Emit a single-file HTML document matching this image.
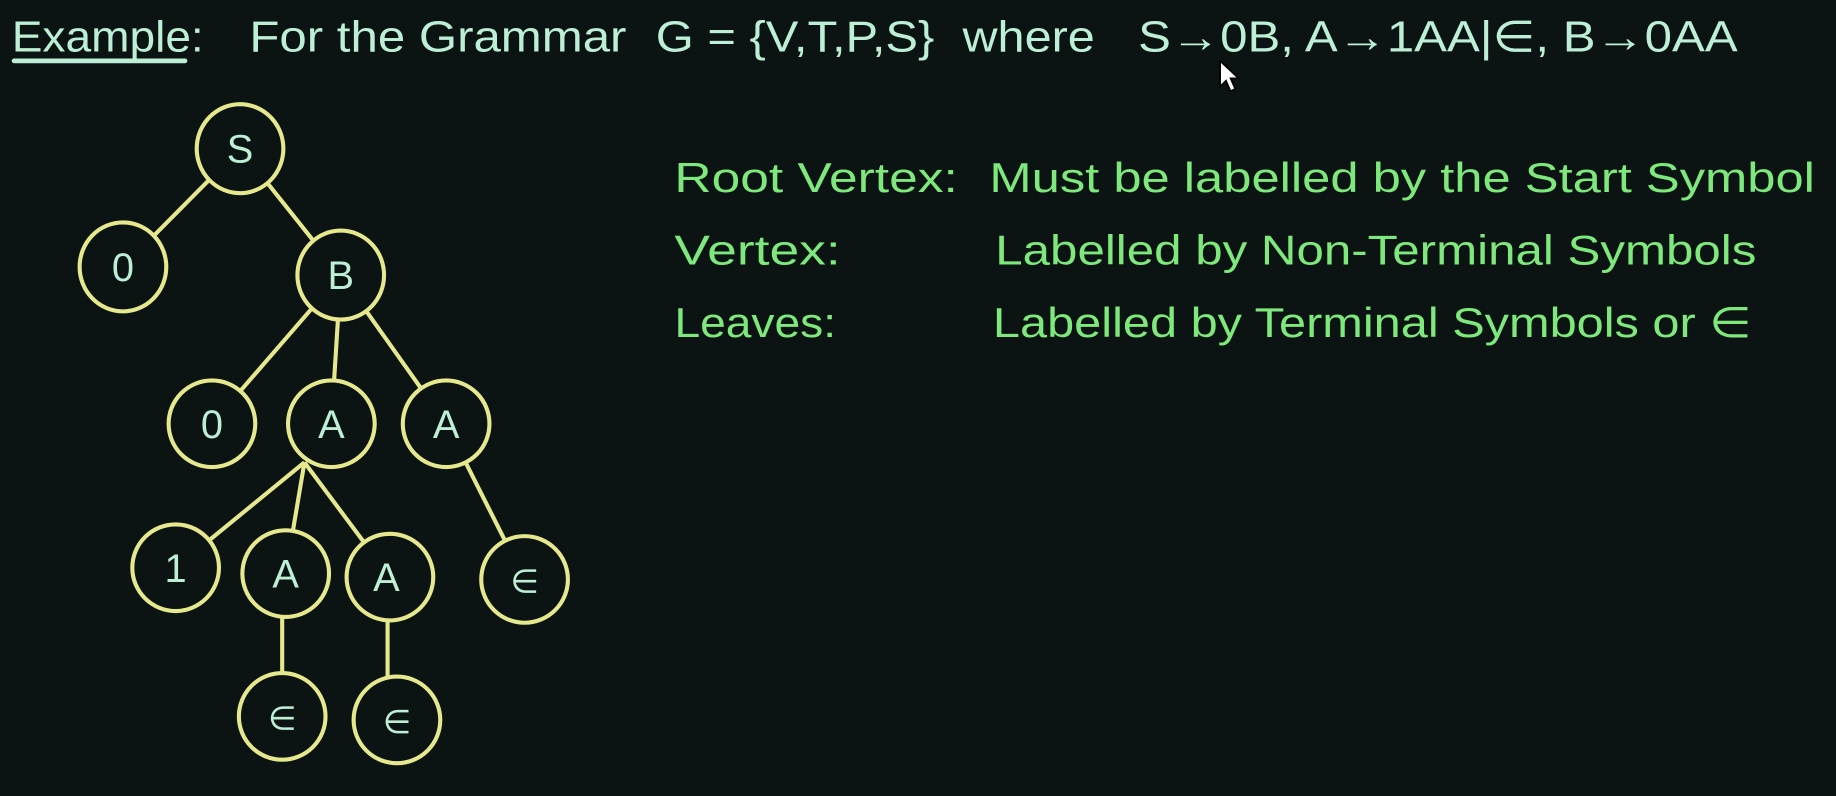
<!DOCTYPE html>
<html><head><meta charset="utf-8"><style>
html,body{margin:0;padding:0;background:#0b1412;width:1836px;height:796px;overflow:hidden}
svg{display:block}
text{font-family:"Liberation Sans","DejaVu Sans",sans-serif}
</style></head><body>
<svg width="1836" height="796" viewBox="0 0 1568 680" preserveAspectRatio="none">
<rect width="1568" height="680" fill="#0b1412"/>
<g fill="#bdeed6" font-size="37">
<text x="10" y="44" textLength="164" lengthAdjust="spacingAndGlyphs">Example:</text>
<text x="213" y="44" textLength="322" lengthAdjust="spacingAndGlyphs">For the Grammar</text>
<text x="560" y="44" textLength="238" lengthAdjust="spacingAndGlyphs">G = {V,T,P,S}</text>
<text x="822" y="44" textLength="113" lengthAdjust="spacingAndGlyphs">where</text>
<text x="972" y="44" textLength="512" lengthAdjust="spacingAndGlyphs">S→0B,  A→1AA|∈,  B→0AA</text>
</g>
<rect x="10" y="50" width="150" height="4" rx="2" fill="#bdeed6"/>
<path d="M1042 52 l0 22 l5 -5 l4 9 l4 -2 l-4 -9 l7 0 z" fill="#fff" stroke="#000" stroke-width="1.5"/>
<g fill="#7ee87c" font-size="36">
<text x="576" y="164" textLength="242" lengthAdjust="spacingAndGlyphs">Root Vertex:</text>
<text x="845" y="164" textLength="705" lengthAdjust="spacingAndGlyphs">Must be labelled by the Start Symbol</text>
<text x="576" y="226" textLength="142" lengthAdjust="spacingAndGlyphs">Vertex:</text>
<text x="850" y="226" textLength="650" lengthAdjust="spacingAndGlyphs">Labelled by Non-Terminal Symbols</text>
<text x="576" y="288" textLength="138" lengthAdjust="spacingAndGlyphs">Leaves:</text>
<text x="848" y="288" textLength="648" lengthAdjust="spacingAndGlyphs">Labelled by Terminal Symbols or ∈</text>
</g>
<g stroke="#e6e88e" stroke-width="3.5" fill="none">
<line x1="205" y1="127" x2="105" y2="228"/>
<line x1="205" y1="127" x2="291" y2="235"/>
<line x1="291" y1="235" x2="181" y2="362"/>
<line x1="291" y1="235" x2="283" y2="362"/>
<line x1="291" y1="235" x2="381" y2="362"/>
<line x1="260" y1="395" x2="150" y2="485"/>
<line x1="260" y1="395" x2="244" y2="490"/>
<line x1="260" y1="395" x2="333" y2="493"/>
<line x1="381" y1="362" x2="448" y2="495"/>
<line x1="241" y1="490" x2="241" y2="612"/>
<line x1="331" y1="493" x2="331" y2="615"/>
</g>
<g stroke="#e6e88e" stroke-width="3.5" fill="#0b1412">
<ellipse cx="205" cy="127" rx="37" ry="38"/>
<ellipse cx="105" cy="228" rx="37" ry="38"/>
<ellipse cx="291" cy="235" rx="37" ry="38"/>
<ellipse cx="181" cy="362" rx="37" ry="37"/>
<ellipse cx="283" cy="362" rx="37" ry="37"/>
<ellipse cx="381" cy="362" rx="37" ry="37"/>
<ellipse cx="150" cy="485" rx="37" ry="37"/>
<ellipse cx="244" cy="490" rx="37" ry="37"/>
<ellipse cx="333" cy="493" rx="37" ry="37"/>
<ellipse cx="448" cy="495" rx="37" ry="37"/>
<ellipse cx="241" cy="612" rx="37" ry="37"/>
<ellipse cx="339" cy="615" rx="37" ry="37"/>
</g>
<g fill="#bdeed6" font-size="34" text-anchor="middle">
<text x="205" y="139">S</text>
<text x="105" y="240">0</text>
<text x="291" y="247">B</text>
<text x="181" y="374">0</text>
<text x="283" y="374">A</text>
<text x="381" y="374">A</text>
<text x="150" y="497">1</text>
<text x="244" y="502">A</text>
<text x="330" y="505">A</text>
<text x="448" y="506" font-size="28">∈</text>
<text x="241" y="623" font-size="28">∈</text>
<text x="339" y="626" font-size="28">∈</text>
</g>
</svg>
</body></html>
